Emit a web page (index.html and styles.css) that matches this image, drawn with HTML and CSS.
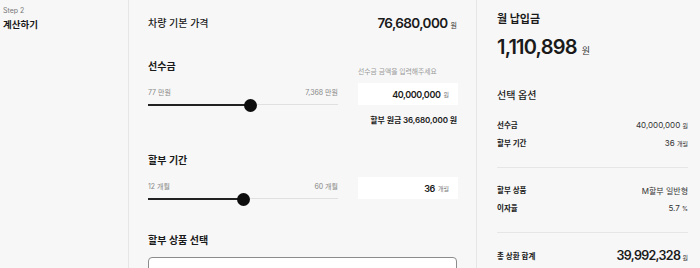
FILE: index.html
```html
<!DOCTYPE html>
<html lang="ko">

<head>
  <meta charset="UTF-8">
  <meta name="viewport" content="width=device-width, initial-scale=1.0">
  <title>할부 계산하기</title>
  <link rel="stylesheet" href="styles.css">
</head>

<body>
  <div class="page">
    <aside class="steps">
      <p class="step-no">Step 2</p>
      <h2 class="step-title">계산하기</h2>
    </aside>

    <main class="calc">
      <div class="price-row">
        <h3 class="price-label">차량 기본 가격</h3>
        <p class="price"><strong>76,680,000</strong><span class="unit">원</span></p>
      </div>

      <section class="block">
        <h3 class="block-title">선수금</h3>
        <p class="hint">선수금 금액을 입력해주세요</p>
        <div class="range">
          <div class="range-labels"><span>77 만원</span><span>7,368 만원</span></div>
          <div class="track">
            <div class="fill" style="width: 53.8%"></div>
            <div class="thumb" style="left: 53.8%"></div>
          </div>
        </div>
        <div class="field"><strong>40,000,000</strong><span class="unit">원</span></div>
      </section>
      <p class="principal">할부 원금 36,680,000 원</p>

      <section class="block">
        <h3 class="block-title">할부 기간</h3>
        <div class="range">
          <div class="range-labels"><span>12 개월</span><span>60 개월</span></div>
          <div class="track">
            <div class="fill" style="width: 50%"></div>
            <div class="thumb" style="left: 50%"></div>
          </div>
        </div>
        <div class="field"><strong>36</strong><span class="unit">개월</span></div>
      </section>

      <h3 class="block-title product-title">할부 상품 선택</h3>
      <div class="select"></div>
    </main>

    <aside class="summary">
      <h3 class="summary-title">월 납입금</h3>
      <p class="monthly"><strong>1,110,898</strong><span class="unit">원</span></p>

      <h4 class="option-title">선택 옵션</h4>
      <div class="group first">
        <div class="line"><span class="key">선수금</span><span class="val">40,000,000 <small>원</small></span></div>
        <div class="line"><span class="key">할부 기간</span><span class="val">36 <small>개월</small></span></div>
      </div>
      <div class="group">
        <div class="line"><span class="key">할부 상품</span><span class="val">M할부 일반형</span></div>
        <div class="line"><span class="key">이자율</span><span class="val">5.7 <small>%</small></span></div>
      </div>
      <div class="group">
        <div class="line total"><span class="key">총 상환 합계</span><span class="val"><strong>39,992,328</strong> <small>원</small></span></div>
      </div>
    </aside>
  </div>
</body>

</html>
```

FILE: styles.css
```css
* {
  box-sizing: border-box;
}

body {
  margin: 0;
  background-color: #f7f7f7;
  color: #1a1a1a;
  font-family: "Inter", "Noto Sans CJK KR", sans-serif;
}

h2,
h3,
h4,
p {
  margin: 0;
}

.page {
  display: flex;
  height: 268px;
  overflow: hidden;
}

/* left steps */
.steps {
  width: 129px;
  flex-shrink: 0;
  padding: 6px 0 0 3px;
  border-right: 1px solid #e6e6e6;
}

.step-no {
  font-size: 7px;
  line-height: 10px;
  color: #777;
}

.step-title {
  margin-top: 2px;
  font-size: 9.5px;
  line-height: 13px;
  font-weight: 700;
}

/* middle calculator */
.calc {
  width: 348px;
  flex-shrink: 0;
  padding: 12px 19px 0 19px;
  border-right: 1px solid #e6e6e6;
}

.price-row {
  display: flex;
  justify-content: space-between;
  align-items: center;
  height: 20px;
}

.price-label {
  font-size: 10px;
  font-weight: 500;
}

.price strong {
  font-size: 13.5px;
  font-weight: 600;
  letter-spacing: -0.6px;
}

.unit {
  margin-left: 3px;
  font-size: 7px;
  color: #333;
}

.block {
  display: grid;
  grid-template-columns: 190px 100px;
  column-gap: 20px;
  margin-top: 25px;
}

.block-title {
  grid-column: 1;
  grid-row: 1;
  font-size: 10px;
  line-height: 18px;
  font-weight: 600;
}

.hint {
  grid-column: 2;
  grid-row: 1;
  align-self: end;
  margin-bottom: -2px;
  font-size: 6.8px;
  line-height: 10px;
  color: #999;
}

.range {
  grid-column: 1;
  grid-row: 2;
  padding-top: 13px;
}

.range-labels {
  display: flex;
  justify-content: space-between;
  font-size: 7px;
  line-height: 10px;
  color: #888;
  margin-bottom: 1px;
}

.track {
  position: relative;
  height: 12px;
}

.track::before {
  content: "";
  position: absolute;
  left: 0;
  right: 0;
  top: 5px;
  height: 1px;
  background-color: #e0e0e0;
}

.fill {
  position: absolute;
  left: 0;
  top: 5px;
  height: 2px;
  background-color: #222;
}

.thumb {
  position: absolute;
  top: -0.5px;
  width: 13px;
  height: 13px;
  margin-left: -6.5px;
  border-radius: 50%;
  background-color: #0d0d0d;
}

.field {
  grid-column: 2;
  grid-row: 2;
  align-self: start;
  margin-top: 8px;
  height: 22px;
  display: flex;
  align-items: center;
  justify-content: flex-end;
  padding-right: 9px;
  background-color: #fff;
}

.field strong {
  font-size: 9px;
  font-weight: 600;
  letter-spacing: -0.4px;
}

.field .unit {
  font-size: 6px;
  color: #777;
}

.principal {
  margin-top: 3px;
  text-align: right;
  font-size: 8px;
  line-height: 12px;
  font-weight: 600;
  letter-spacing: -0.1px;
}

.product-title {
  margin-top: 26px;
}

.select {
  margin-top: 8px;
  height: 40px;
  border: 1px solid #8c8c8c;
  border-radius: 4px;
  background-color: #fff;
}

/* right summary */
.summary {
  flex: 1;
  padding: 11px 12px 0 20px;
}

.summary-title {
  font-size: 11px;
  line-height: 16px;
  font-weight: 700;
}

.monthly {
  margin-top: 7px;
  line-height: 26px;
}

.monthly strong {
  font-size: 20px;
  font-weight: 600;
  letter-spacing: -0.8px;
}

.monthly .unit {
  font-size: 9px;
  margin-left: 5px;
}

.option-title {
  margin-top: 24px;
  font-size: 10px;
  line-height: 14px;
  font-weight: 500;
}

.group {
  display: flex;
  flex-direction: column;
  gap: 5px;
  padding: 17px 0;
  border-top: 1px solid #e6e6e6;
}

.group.first {
  border-top: none;
}

.line {
  display: flex;
  justify-content: space-between;
  align-items: center;
  font-size: 7.5px;
  line-height: 12px;
}

.key {
  font-weight: 600;
}

.val {
  font-size: 8px;
  color: #333;
}

.val small {
  font-size: 6px;
}

.total .val strong {
  font-size: 12.5px;
  font-weight: 600;
  letter-spacing: -0.7px;
  color: #1a1a1a;
}
```
